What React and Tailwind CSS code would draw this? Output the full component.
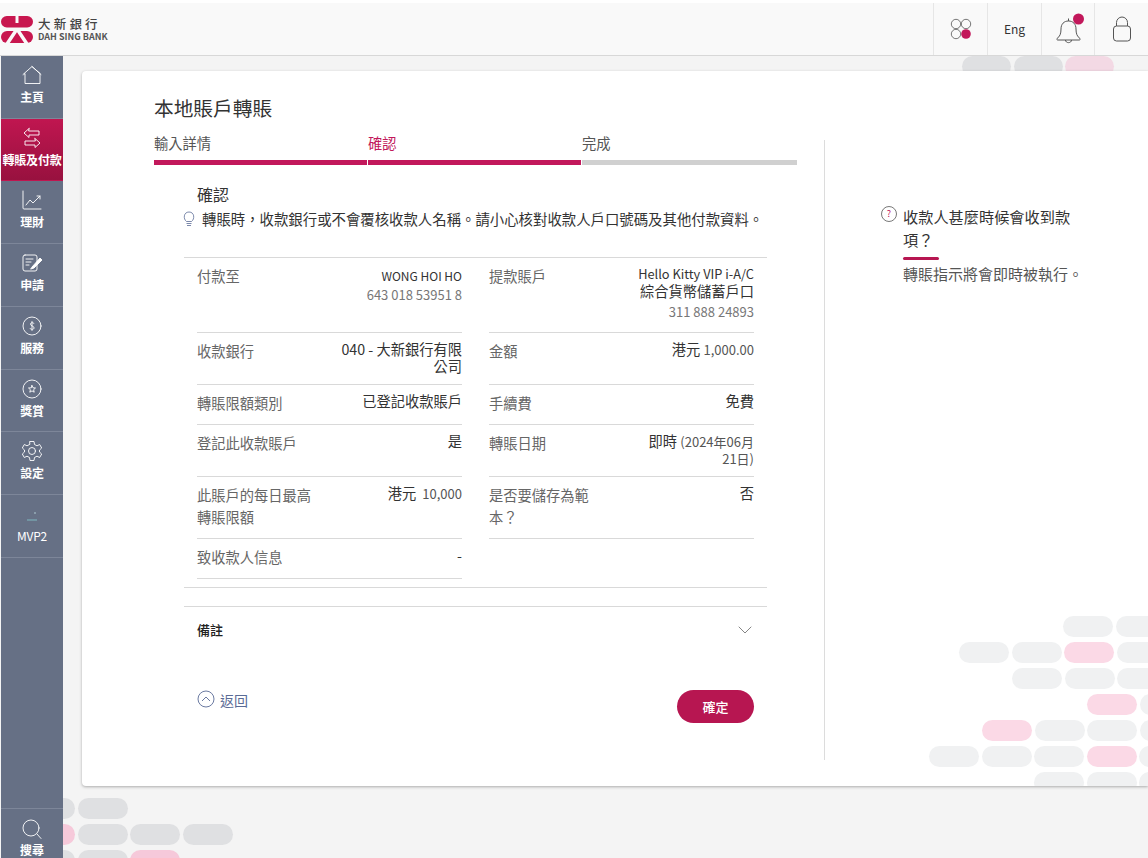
import React from 'react';
import { ChevronDown } from 'lucide-react';

const font = "font-['Noto_Sans_CJK_TC','Noto_Sans',sans-serif]";

const Logo = () => (
  <svg width="33" height="27" viewBox="0 0 33 27" className="shrink-0">
    <rect x="0" y="0" width="32" height="11.500" rx="5.750" fill="#c8174f" />
    <rect x="0" y="15" width="32" height="12" rx="6" fill="#c8174f" />
    <path d="M16 0V7" stroke="#f9f9f9" strokeWidth="3" />
    <path d="M16 13L6 28M16 13L26 28" stroke="#f9f9f9" strokeWidth="3.500" fill="none" />
  </svg>
);

const NavIcon = ({ name }) => {
  const base = { width: 22, height: 22, viewBox: '0 0 22 22', fill: 'none', stroke: '#fff', strokeWidth: 0.9, strokeLinecap: 'round', strokeLinejoin: 'round' };
  if (name === 'home') return <svg {...base}><path d="M11 2.500L19 9.500V19.500H4V9.500L3 10.500" /><path d="M2 10.500L11 2.500L20 10.500" /></svg>;
  if (name === 'transfer') return <svg {...base}><path d="M8 1.500L3 6L8 10.500V8H18V4H8Z" /><path d="M14 11.500L19 16L14 20.500V18H4V14H14Z" /></svg>;
  if (name === 'chart') return <svg {...base}><path d="M2 2V19C2 19.600 2.400 20 3 20H20" /><path d="M5 16L9 11L12 14L19 7" /><path d="M16 7H19V10" /></svg>;
  if (name === 'apply') return <svg {...base}><rect x="2" y="3" width="14" height="16" rx="2" /><path d="M5 7H12M5 10H10M5 13H8" /><path d="M11 15L19 6L21 8L13 16L10 17Z" fill="#fff" /></svg>;
  if (name === 'service') return <svg {...base}><circle cx="11" cy="11" r="9" /><path d="M13 8.500C12.500 7.500 9.500 7 9.500 9.200C9.500 11.300 13 10.700 13 12.800C13 15 9.800 14.600 9 13.500M11 6.500V15.500" /></svg>;
  if (name === 'reward') return <svg {...base}><circle cx="11" cy="11" r="9" /><path d="M11 7.500L12 9.800L14.500 10L12.600 11.700L13.200 14.200L11 12.900L8.800 14.200L9.400 11.700L7.500 10L10 9.800Z" /></svg>;
  if (name === 'settings') return <svg {...base}><circle cx="11" cy="11" r="3.500" /><path d="M9 1.500H13L13.500 4.500L16 5.800L18.700 4.500L20.700 8L18.500 10V12L20.700 14L18.700 17.500L16 16.200L13.500 17.500L13 20.500H9L8.500 17.500L6 16.200L3.300 17.500L1.300 14L3.500 12V10L1.300 8L3.300 4.500L6 5.800L8.500 4.500Z" /></svg>;
  if (name === 'search') return <svg {...base}><circle cx="10" cy="10" r="8" /><path d="M16 16L20 20.500" /></svg>;
  return <svg width="22" height="22" viewBox="0 0 22 22"><path d="M6 17H16" stroke="#7fb8c0" strokeWidth="1" /><circle cx="14" cy="10" r="0.800" fill="#b9d6dc" /></svg>;
};

const navItems = [
  { icon: 'home', label: '主頁', h: 'h-[63px]' },
  { icon: 'transfer', label: '轉賬及付款', h: 'h-[62px]', active: true },
  { icon: 'chart', label: '理財', h: 'h-[63px]' },
  { icon: 'apply', label: '申請', h: 'h-[63px]' },
  { icon: 'service', label: '服務', h: 'h-[63px]' },
  { icon: 'reward', label: '獎賞', h: 'h-[62px]' },
  { icon: 'settings', label: '設定', h: 'h-[63px]' },
  { icon: 'mvp', label: 'MVP2', h: 'h-[63px]' },
];

const NavItem = ({ icon, label, h, active }) => (
  <div className={`${h} shrink-0 flex flex-col items-center pt-2 border-b border-[#7d8699] text-white ${active ? 'bg-gradient-to-b from-[#c01650] to-[#98113f] border-transparent' : ''}`}>
    <NavIcon name={icon} />
    <span className={`mt-[3px] text-[12px] leading-[16px] whitespace-nowrap tracking-[-0.2px] ${icon === 'mvp' ? 'font-normal' : 'font-bold'}`}>{label}</span>
  </div>
);

const g = 'bg-[#dfe0e2]';
const pink = 'bg-[#f6c9da]';
const lg = 'bg-[#f0f1f2]';
const lp = 'bg-[#fbd9e6]';

const PillRow = ({ offset, colors }) => (
  <div className={`flex gap-[2.500px] h-[21px] ${offset}`}>
    {colors.map((c, i) => <div key={i} className={`w-[50px] h-[21px] shrink-0 rounded-[11px] ${c}`} />)}
  </div>
);

const Cell = ({ label, children, className = '' }) => (
  <div className={`flex justify-between border-b border-[#d9d9d9] gap-3 ${className}`}>
    <div className="w-[125px] shrink-0 text-[14.250px] leading-[22px] text-[#666] pt-[7px]">{label}</div>
    <div className="flex-1 text-right text-[14.250px] leading-[16px] text-[#333] pt-2">{children}</div>
  </div>
);

const Steps = () => (
  <div className="flex w-[643px] mt-[10px]">
    <div className="w-[213px] mr-px">
      <div className="text-[14.250px] leading-[22px] text-[#555]">輸入詳情</div>
      <div className="h-[5px] mt-[6px] bg-[#c2185b]"></div>
    </div>
    <div className="w-[213px] mr-px">
      <div className="text-[14.250px] leading-[22px] text-[#c2185b]">確認</div>
      <div className="h-[5px] mt-[6px] bg-[#c2185b]"></div>
    </div>
    <div className="flex-1">
      <div className="text-[14.250px] leading-[22px] text-[#555]">完成</div>
      <div className="h-[5px] mt-[6px] bg-[#d0d0d0]"></div>
    </div>
  </div>
);

export default function App() {
  return (
    <div className={`relative w-[1148px] h-[858px] overflow-hidden bg-[#f4f4f4] flex flex-col ${font}`}>
      <div className="h-[3px] shrink-0 bg-white"></div>
      <header className="h-[53px] shrink-0 bg-[#f9f9f9] border-b border-[#d8d8d8] flex items-center relative z-20">
        <div className="flex items-center gap-[4px] pl-px">
          <Logo />
          <div className="text-[#444]">
            <div className="text-[12.500px] leading-[14px] tracking-[3.200px] font-medium">大新銀行</div>
            <div className="text-[9px] leading-[11px] font-bold text-[#555]">DAH SING BANK</div>
          </div>
        </div>
        <div className="ml-auto flex h-full">
          <div className="w-[54px] border-l border-[#e6e6e6] flex items-center justify-center">
            <svg width="22" height="22" viewBox="0 0 22 22" fill="none" stroke="#555" strokeWidth="0.800">
              <circle cx="6" cy="6" r="4.700" /><circle cx="16" cy="6" r="4.700" /><circle cx="6" cy="16" r="4.700" />
              <circle cx="16" cy="16" r="4.800" fill="#c2185b" stroke="none" />
            </svg>
          </div>
          <div className="w-[54px] border-l border-[#e6e6e6] flex items-center justify-center text-[12px] text-[#333]">Eng</div>
          <div className="w-[53px] border-l border-[#e6e6e6] flex items-center justify-center">
            <svg width="30" height="32" viewBox="0 0 30 32" fill="none" stroke="#555" strokeWidth="1" className="ml-[3px]">
              <path d="M2 25.500C5 23.500 6 20.500 6 16C6 11 9 8 13.500 8C18 8 21 11 21 16C21 20.500 22 23.500 25 25.500C25.500 26.500 25 27 24 27H3C2 27 1.500 26.500 2 25.500Z" />
              <path d="M13.500 8V5.500M10.500 27C10.500 30.500 16.500 30.500 16.500 27" />
              <circle cx="23.500" cy="6" r="5.500" fill="#c2185b" stroke="none" />
            </svg>
          </div>
          <div className="w-[54px] border-l border-[#e6e6e6] flex items-center justify-center">
            <svg width="20" height="26" viewBox="0 0 20 26" fill="none" stroke="#555" strokeWidth="1">
              <rect x="1.500" y="10" width="17" height="15" rx="3" />
              <path d="M4.500 10V6.500C4.500 3.500 7 1 10 1C13 1 15.500 3.500 15.500 6.500V10" />
            </svg>
          </div>
        </div>
      </header>

      <div className="flex-1 flex relative min-h-0">
        {/* decorative pills behind the page */}
        <div className="absolute left-[962px] top-0 flex gap-[2.500px]">
          <div className={`w-[49px] h-[21px] rounded-[11px] ${g}`} />
          <div className={`w-[49px] h-[21px] rounded-[11px] ${g}`} />
          <div className={`w-[49px] h-[21px] rounded-[11px] bg-[#f3d9e4]`} />
        </div>
        <div className="absolute left-[25px] top-[742px] flex flex-col gap-[5px]">
          <PillRow offset="" colors={[g, g]} />
          <PillRow offset="" colors={[pink, g, g, g]} />
          <PillRow offset="" colors={[g, g, pink]} />
        </div>

        <nav className="relative z-10 ml-px w-[62px] shrink-0 bg-[#667085] flex flex-col">
          {navItems.map((item) => <NavItem key={item.label} {...item} />)}
          <div className="mt-auto h-[50px] border-t border-[#7d8699] flex flex-col items-center pt-[9px] text-white">
            <NavIcon name="search" />
            <span className="mt-[2px] text-[12px] leading-[16px] font-bold">搜尋</span>
          </div>
        </nav>

        <main className="relative flex-1 min-w-0 mt-[15px] ml-[19px] h-[715px] bg-white rounded-tl-[4px] rounded-bl-[4px] shadow-[0_1px_3px_rgba(0,0,0,0.3)] overflow-hidden flex">
          <div className="absolute left-[847px] top-[545px] flex flex-col gap-[5px]">
            <PillRow offset="ml-[134px]" colors={[lg, lg]} />
            <PillRow offset="ml-[30px]" colors={[lg, lg, lp, lg]} />
            <PillRow offset="ml-[83px]" colors={[lg, lg, lg]} />
            <PillRow offset="ml-[158px]" colors={[lp, lg]} />
            <PillRow offset="ml-[53px]" colors={[lp, lg, lg, lg]} />
            <PillRow offset="" colors={[lg, lg, lg, lp, lg]} />
            <PillRow offset="ml-[105px]" colors={[lg, lg, lg]} />
          </div>

          <section className="relative w-[742px] shrink-0 pl-[72px] pt-[23px]">
            <h1 className="text-[19.700px] leading-[28px] text-[#333]">本地賬戶轉賬</h1>
            <Steps />

            <div className="relative w-[583px] ml-[30px] mt-[18px]">
              <h2 className="pl-[13px] text-[16px] leading-[22px] text-[#333]">確認</h2>
              <div className="flex items-center mt-[4px] -ml-[2px] gap-[6px] whitespace-nowrap">
                <svg width="14" height="17" viewBox="0 0 14 17" fill="none" stroke="#5a6b96" strokeWidth="0.800" className="shrink-0">
                  <path d="M4.500 10.500C1 8 1.500 1 7 1C12.500 1 13 8 9.500 10.500Z" />
                  <path d="M4.500 12.500H9.500M5 14.500H9" />
                </svg>
                <span className="text-[14.400px] leading-[20px] text-[#333]">轉賬時，收款銀行或不會覆核收款人名稱。請小心核對收款人戶口號碼及其他付款資料。</span>
              </div>

              <div className="mt-[28px] border-t border-[#d9d9d9] pl-[13px] pr-[12px] pb-2 border-b">
                <div className="grid grid-cols-[265px_265px] gap-x-[27px] grid-rows-[75px_52px_40px_52px_62px_40px]">
                  <Cell label="付款至">
                    <div className="text-[12px] leading-[18px] pt-px">WONG HOI HO</div>
                    <div className="text-[13px] leading-[20px] text-[#777]">643 018 53951 8</div>
                  </Cell>
                  <Cell label="提款賬戶">
                    <div className="leading-[17px] text-[12.800px] -mt-px">Hello Kitty VIP i-A/C</div>
                    <div className="leading-[17px]">綜合貨幣儲蓄戶口</div>
                    <div className="text-[13px] leading-[22px] text-[#777] mt-[2px]">311 888 24893</div>
                  </Cell>
                  <Cell label="收款銀行"><div className="leading-[17px] -mt-px">040 - 大新銀行有限公司</div></Cell>
                  <Cell label="金額">港元 <span className="text-[13px] text-[#555]">1,000.00</span></Cell>
                  <Cell label="轉賬限額類別">已登記收款賬戶</Cell>
                  <Cell label="手續費">免費</Cell>
                  <Cell label="登記此收款賬戶">是</Cell>
                  <Cell label="轉賬日期">
                    <div className="leading-[17px] -mt-px">即時 <span className="text-[13px] text-[#555]">(2024年06月</span></div>
                    <div className="leading-[17px] text-[13px] text-[#555]">21日)</div>
                  </Cell>
                  <Cell label="此賬戶的每日最高轉賬限額">港元 <span className="text-[13px] text-[#555]">&nbsp;10,000</span></Cell>
                  <Cell label="是否要儲存為範本？">否</Cell>
                  <Cell label="致收款人信息">-</Cell>
                </div>
              </div>

              <div className="mt-[18px] border-t border-[#d9d9d9] h-[47px] pl-[13px] pr-[10px] flex items-center justify-between">
                <span className="text-[13px] font-medium text-[#222] -mt-px">備註</span>
                <ChevronDown size={24} strokeWidth={0.8} color="#666" />
              </div>

              <div className="mt-[32px] flex justify-between items-start pl-[13px] pr-[13px]">
                <div className="flex items-center gap-[5px]">
                  <svg width="18" height="18" viewBox="0 0 18 18" fill="none" stroke="#5a6b96" strokeWidth="0.900">
                    <circle cx="9" cy="9" r="8" /><path d="M5 11L9 7L13 11" />
                  </svg>
                  <span className="text-[14px] leading-[24px] text-[#5a6b96] mt-[3px]">返回</span>
                </div>
                <button className="w-[77px] h-[33px] mt-[5px] rounded-full bg-[#b71651] text-white text-[13px] font-medium">確定</button>
              </div>
            </div>
          </section>

          <aside className="relative ml-0 mt-[69px] h-[620px] border-l border-[#dcdcdc] pl-[56px] w-[300px]">
            <div className="flex mt-[65px]">
              <svg width="16" height="16" viewBox="0 0 16 16" fill="none" stroke="#555" strokeWidth="0.800" className="shrink-0 mt-[1px]">
                <circle cx="8" cy="8" r="7.500" />
                <text x="8" y="11" textAnchor="middle" fontSize="9" fill="#c2185b" stroke="none">?</text>
              </svg>
              <div className="ml-[6px] w-[172px] text-[15.200px] leading-[23px] text-[#333]">收款人甚麼時候會收到款項？</div>
            </div>
            <div className="ml-[22px] mt-[6px] w-[36px] h-[3px] bg-[#b71651] rounded-full"></div>
            <div className="ml-[22px] mt-[2px] text-[15px] leading-[24px] text-[#555] whitespace-nowrap">轉賬指示將會即時被執行。</div>
          </aside>
        </main>
      </div>
    </div>
  );
}
